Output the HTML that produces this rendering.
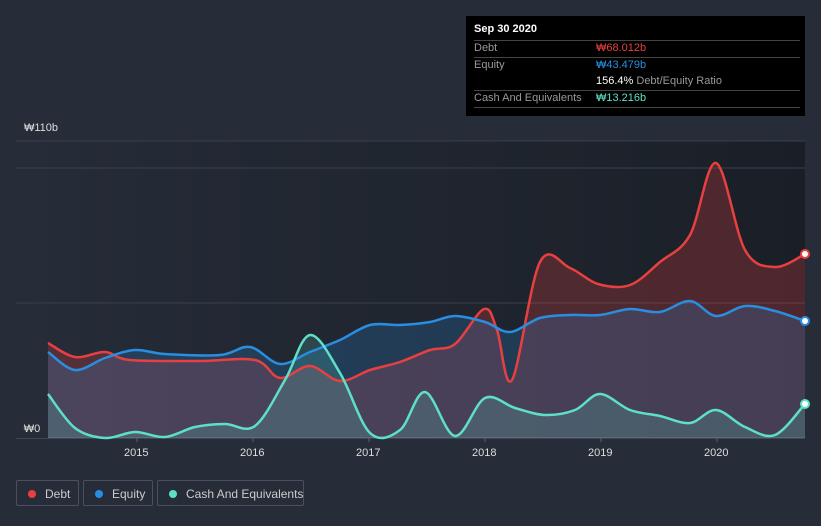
<!DOCTYPE html>
<html><head><meta charset="utf-8"><style>
body{margin:0;width:821px;height:526px;background:#262c38;font-family:"Liberation Sans","Noto Sans CJK KR",sans-serif;overflow:hidden;position:relative}
.tip{position:absolute;left:466px;top:16px;width:339px;height:100px;background:#000;color:#fff;font-size:11px}
.tip .r{position:absolute;left:8px;width:326px;height:16px;line-height:16px;color:#999}
.tip .r b{position:absolute;left:122px;font-weight:normal}
.hl{position:absolute;left:8px;width:326px;height:1px;background:#444}
.leg{position:absolute;top:480px;height:26px;border:1px solid #4a505c;border-radius:2px;color:#ccc;font-size:12px;line-height:26px;box-sizing:border-box;white-space:nowrap}
.leg i{position:absolute;left:11px;top:9px;width:8px;height:8px;border-radius:50%}
.leg span{position:absolute;left:28px}
.ax{position:absolute;top:447px;color:#ddd;font-size:11px}
</style></head><body>
<svg width="821" height="526" style="position:absolute;left:0;top:0">
<defs><linearGradient id="bg" x1="0" x2="1"><stop offset="0" stop-color="#262c38"/><stop offset="1" stop-color="#1a1f27"/></linearGradient></defs>
<rect x="16" y="141" width="789" height="297" fill="url(#bg)"/>
<line x1="16" x2="805" y1="141" y2="141" stroke="#3a404b"/>
<line x1="16" x2="805" y1="168" y2="168" stroke="#3a404b"/>
<line x1="16" x2="805" y1="303" y2="303" stroke="#3a404b"/>
<line x1="16" x2="805" y1="438" y2="438" stroke="#5a606b"/>
<g stroke="#5a606b"><line x1="137" x2="137" y1="438" y2="442"/><line x1="253" x2="253" y1="438" y2="442"/><line x1="369" x2="369" y1="438" y2="442"/><line x1="485" x2="485" y1="438" y2="442"/><line x1="601" x2="601" y1="438" y2="442"/><line x1="717" x2="717" y1="438" y2="442"/></g>
<path id="fd" fill="#e84040" fill-opacity="0.25"/>
<path id="fe" fill="#2a8ee0" fill-opacity="0.22"/>
<path id="fc" fill="#5ee0c8" fill-opacity="0.18"/>
<g fill="none" stroke-width="2.5" stroke-linejoin="round">
<path id="ld" stroke="#e84040"/>
<path id="le" stroke="#2a8ee0"/>
<path id="lc" stroke="#5ee0c8"/>
</g>
<circle cx="805" cy="254" r="4" fill="#fff" stroke="#e84040" stroke-width="2"/>
<circle cx="805" cy="321" r="4" fill="#fff" stroke="#2a8ee0" stroke-width="2"/>
<circle cx="805" cy="404" r="4" fill="#fff" stroke="#5ee0c8" stroke-width="2"/>
</svg>
<script>
function sm(p){var d="M"+p[0][0]+","+p[0][1];for(var i=0;i<p.length-1;i++){var a=p[i-1]||p[i],b=p[i],c=p[i+1],e=p[i+2]||c;var c1x=b[0]+(c[0]-a[0])/6,c1y=b[1]+(c[1]-a[1])/6,c2x=c[0]-(e[0]-b[0])/6,c2y=c[1]-(e[1]-b[1])/6;d+=" C"+c1x+","+c1y+" "+c2x+","+c2y+" "+c[0]+","+c[1];}return d;}
function P(s){return s.split(" ").map(function(t){return t.split(",").map(Number)});}
var D=P("48,343 75,357 105,352 130,360 200,361 255,360 280,378 310,366 340,381 370,370 400,362 430,350 455,344 484,309 497,330 512,380 540,262 570,268 598,284 630,285 660,262 690,235 716,163 745,250 775,267 805,254");
var E=P("48,352 75,370 105,358 135,350 165,354 220,355 250,347 280,364 310,352 340,340 370,325 400,325 430,322 455,316 485,322 510,332 540,318 570,315 600,315 630,309 660,312 690,301 716,316 745,306 775,311 805,321");
var C=P("48,394 75,428 105,438 135,432 165,437 195,427 225,424 255,426 285,380 310,335 340,373 370,433 400,430 425,392 455,436 485,398 515,408 545,415 575,410 600,394 630,410 660,416 690,423 716,410 745,427 775,435 805,404");
[["d",D],["e",E],["c",C]].forEach(function(x){var s=sm(x[1]);document.getElementById("l"+x[0]).setAttribute("d",s);document.getElementById("f"+x[0]).setAttribute("d",s+" L805,438 L48,438Z");});
</script>
<div style="position:absolute;left:24px;top:122px;color:#ddd;font-size:11px">₩110b</div>
<div style="position:absolute;left:16px;top:420px;width:32px;height:18px;background:#262c38;color:#ddd;font-size:11px;line-height:18px;text-align:center">₩0</div>
<div class="ax" style="left:124px">2015</div><div class="ax" style="left:240px">2016</div><div class="ax" style="left:356px">2017</div><div class="ax" style="left:472px">2018</div><div class="ax" style="left:588px">2019</div><div class="ax" style="left:704px">2020</div>
<div class="tip">
<div style="position:absolute;left:8px;top:7px;font-weight:bold">Sep 30 2020</div>
<div class="hl" style="top:24px"></div>
<div class="r" style="top:24px">Debt<b style="color:#e84040">₩68.012b</b></div>
<div class="hl" style="top:41px"></div>
<div class="r" style="top:41px">Equity<b style="color:#2a8ee0">₩43.479b</b></div>
<div class="r" style="top:57px"><b style="color:#fff">156.4% <span style="color:#999">Debt/Equity Ratio</span></b></div>
<div class="hl" style="top:74px"></div>
<div class="r" style="top:74px">Cash And Equivalents<b style="color:#5ee0c8">₩13.216b</b></div>
<div class="hl" style="top:91px"></div>
</div>
<div class="leg" style="left:16px;width:63px"><i style="background:#e84040"></i><span>Debt</span></div>
<div class="leg" style="left:83px;width:70px"><i style="background:#2a8ee0"></i><span>Equity</span></div>
<div class="leg" style="left:157px;width:147px"><i style="background:#5ee0c8"></i><span>Cash And Equivalents</span></div>
</body></html>
